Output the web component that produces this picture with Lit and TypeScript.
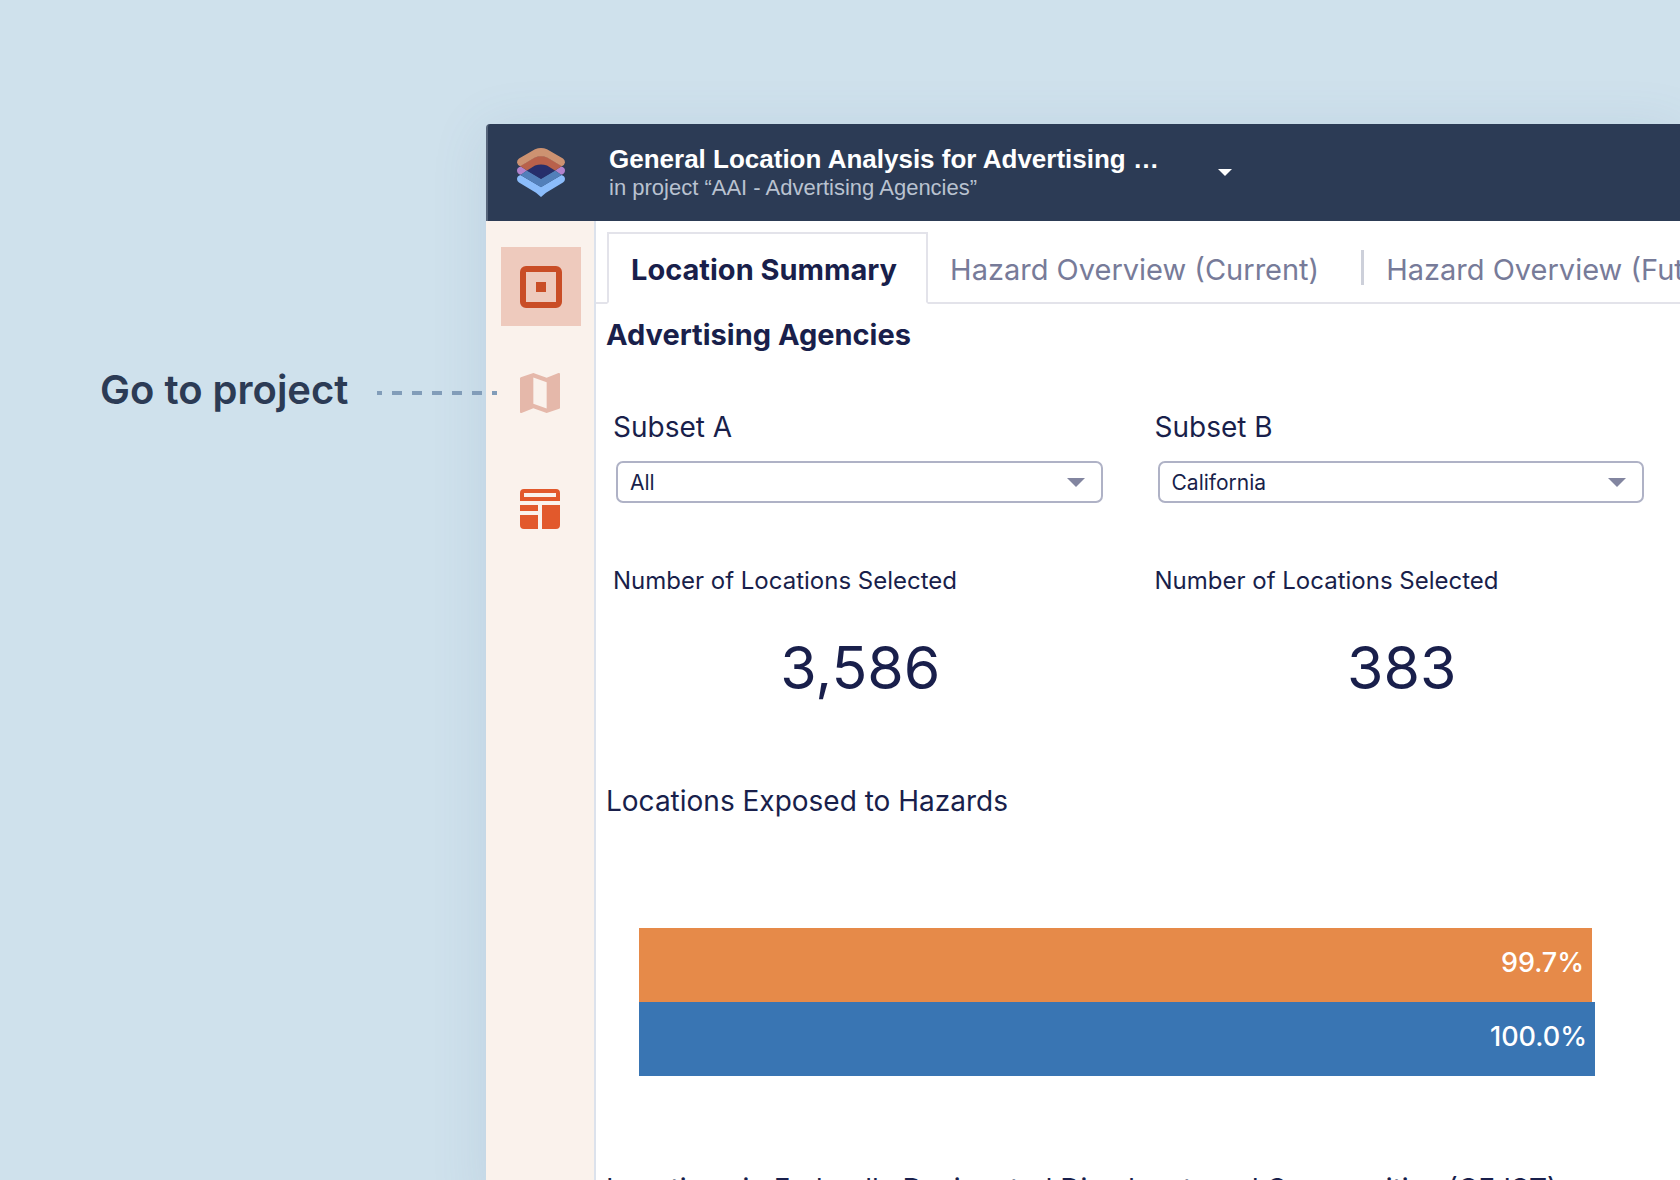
import { LitElement, html, css, svg } from "lit";
import { customElement, property, state } from "lit/decorators.js";
import { classMap } from "lit/directives/class-map.js";
import { styleMap } from "lit/directives/style-map.js";

interface Subset {
  id: string;
  label: string;
  options: string[];
  count: string;
}

interface Exposure {
  subset: string;
  percent: number;
}

const TABS = [
  "Location Summary",
  "Hazard Overview (Current)",
  "Hazard Overview (Future)",
];

const SUBSETS: Subset[] = [
  { id: "subset-a", label: "Subset A", options: ["All"], count: "3,586" },
  { id: "subset-b", label: "Subset B", options: ["California"], count: "383" },
];

const EXPOSURES: Exposure[] = [
  { subset: "a", percent: 99.7 },
  { subset: "b", percent: 100 },
];

const logo = html`
  <svg width="48" height="49" viewBox="0 0 48 49" aria-hidden="true">
    <path fill="#b282cc" d="M4 18.5L10 22.5L4 26.7Q0 26 0 22.5Q0 19.3 4 18.5ZM44 18.5L38 22.5L44 26.7Q48 26 48 22.5Q48 19.3 44 18.5Z" />
    <path fill="#8bbcfb" d="M3.5 27L24 39L44.5 27Q48 28 48 31Q48 33.2 46 34.5L29 44.8L24 49L19 44.8L2 34.5Q0 33.2 0 31Q0 28 3.5 27Z" />
    <path fill="#527fba" d="M10 22.5L24 30.8L38 22.5L44.5 27L24 39.2L3.5 27Z" />
    <path fill="#262e6b" d="M9.8 22.5L18 17.5Q24 15 30 17.5L38.2 22.5L24 31Z" />
    <path fill="#b8614b" d="M24 8Q27 8 30 9.2L45 18L38 22.6L30 17.6Q24 15.2 18 17.6L10 22.6L3 18L18 9.2Q21 8 24 8Z" />
    <path fill="#cd9271" d="M24 0Q27 0 30 1.3L46 10.5Q48 12 48 14.5Q47.5 17.4 44.8 18.2L30 9.5Q24 7 18 9.5L3.2 18.2Q.5 17.4 0 14.5Q0 12 2 10.5L18 1.3Q21 0 24 0Z" />
  </svg>
`;

const NAV_ICONS = {
  project: svg`
    <svg width="42" height="42" viewBox="0 0 42 42" aria-hidden="true">
      <rect x="3" y="3" width="36" height="36" rx="3" fill="none" stroke="#c94d26" stroke-width="6" />
      <rect x="16" y="16" width="10" height="10" fill="#c94d26" />
    </svg>`,
  map: svg`
    <svg width="42" height="42" viewBox="3 3 18.9 18.9" aria-hidden="true">
      <path fill="#e5b8aa" d="M20.5 3l-.16.03L15 5.1 9 3 3.36 4.9c-.21.07-.36.25-.36.48V20.5c0 .28.22.5.5.5l.16-.03L9 18.9l6 2.1 5.64-1.9c.21-.07.36-.25.36-.48V3.5c0-.28-.22-.5-.5-.5zM15 19l-6-2.11V5l6 2.11V19z" />
    </svg>`,
  dashboard: svg`
    <svg width="42" height="42" viewBox="0 -1 42 42" aria-hidden="true">
      <path fill="#e2592c" fill-rule="evenodd" d="M4 0H36A4 4 0 0 1 40 4V12H0V4A4 4 0 0 1 4 0ZM4 4V8H36V4ZM0 16H18V22H0ZM0 26H18V40H4A4 4 0 0 1 0 36ZM22 16H40V36A4 4 0 0 1 36 40H22Z" />
    </svg>`,
};

@customElement("app-header")
class AppHeader extends LitElement {
  static styles = css`
    :host {
      display: block;
    }
    .bar {
      display: flex;
      align-items: center;
      box-sizing: border-box;
      min-height: 97px;
      padding: 0 29px;
      background: #2c3b55;
      border-left: 2px solid #56647a;
      border-top-left-radius: 4px;
      font-family: "Liberation Sans", Arial, sans-serif;
      color: #fff;
    }
    .logo {
      display: flex;
      margin-right: 44px;
    }
    .title {
      margin: 0;
      font-size: 26px;
      line-height: 30px;
      font-weight: 700;
      white-space: nowrap;
    }
    .project {
      margin: 0;
      font-size: 22px;
      line-height: 28px;
      color: #b9c2d0;
      white-space: nowrap;
    }
    .menu {
      display: flex;
      align-items: center;
      justify-content: center;
      width: 40px;
      height: 40px;
      margin-left: 46px;
      padding: 0;
      border: 0;
      background: none;
    }
  `;

  render() {
    return html`
      <header class="bar">
        <a class="logo" href="#home" aria-label="Home">${logo}</a>
        <div>
          <h1 class="title">General Location Analysis for Advertising …</h1>
          <p class="project">in project “AAI - Advertising Agencies”</p>
        </div>
        <button class="menu" type="button" aria-label="Switch analysis">
          <svg width="14" height="7" viewBox="0 0 14 7" aria-hidden="true">
            <path d="M0 0H14L7 7Z" fill="#fff" />
          </svg>
        </button>
      </header>
    `;
  }
}

@customElement("side-nav")
class SideNav extends LitElement {
  static styles = css`
    :host {
      display: block;
      background: #faf2ec;
      border-right: 2px solid #dce2ec;
    }
    .items {
      display: flex;
      flex-direction: column;
      align-items: center;
      gap: 28px;
      padding: 26px 13px 26px 15px;
    }
    .item {
      display: flex;
      align-items: center;
      justify-content: center;
      width: 80px;
      height: 79px;
      padding: 0;
      border: 0;
      background: none;
    }
    .item.active {
      background: #eecabd;
    }
    .item.separate {
      margin-top: 8px;
    }
  `;

  render() {
    return html`
      <nav class="items" aria-label="Views">
        <button class="item active" type="button" aria-label="Analysis">${NAV_ICONS.project}</button>
        <button class="item" type="button" aria-label="Map">${NAV_ICONS.map}</button>
        <button class="item separate" type="button" aria-label="Dashboard">${NAV_ICONS.dashboard}</button>
      </nav>
    `;
  }
}

@customElement("tab-strip")
class TabStrip extends LitElement {
  @state() private selected = 0;

  static styles = css`
    :host {
      display: block;
      min-width: 0;
      overflow: hidden;
    }
    .tabs {
      display: flex;
      padding-top: 11px;
    }
    .lead {
      flex: 0 0 11px;
      border-bottom: 2px solid #e3e3ea;
    }
    .rest {
      flex: 1 0 0;
      border-bottom: 2px solid #e3e3ea;
    }
    .tab {
      display: flex;
      align-items: center;
      flex: none;
      box-sizing: border-box;
      height: 72px;
      padding: 6px 0 0 22px;
      border: 0;
      border-bottom: 2px solid #e3e3ea;
      background: none;
      font-family: Inter, sans-serif;
      font-size: 29px;
      line-height: 36px;
      color: #777b99;
      white-space: nowrap;
    }
    .tab.active {
      padding: 4px 29px 0 22px;
      border: 2px solid #e3e3ea;
      border-bottom-color: transparent;
      color: #191f4b;
      font-weight: 700;
    }
    .divider {
      width: 3px;
      height: 35px;
      margin: 0 0 6px 42px;
      background: #cdd0da;
    }
  `;

  render() {
    return html`
      <div class="tabs" role="tablist">
        <span class="lead"></span>
        ${TABS.map(
          (name, i) => html`
            <button
              class=${classMap({ tab: true, active: i === this.selected })}
              type="button"
              role="tab"
              aria-selected=${i === this.selected}
              @click=${() => (this.selected = i)}
            >
              ${name}${i === this.selected ? "" : html`<span class="divider"></span>`}
            </button>
          `
        )}
        <span class="rest"></span>
      </div>
    `;
  }
}

@customElement("subset-panel")
class SubsetPanel extends LitElement {
  @property({ attribute: false }) subset!: Subset;

  static styles = css`
    :host {
      display: flex;
      flex-direction: column;
      min-width: 0;
      font-family: Inter, sans-serif;
      color: #191f4b;
    }
    .label {
      font-size: 28px;
      line-height: 34px;
    }
    .picker {
      display: grid;
      align-items: center;
      margin: 17px 0 63px 3px;
    }
    .select {
      grid-area: 1 / 1;
      appearance: none;
      box-sizing: border-box;
      width: 100%;
      height: 42px;
      padding: 0 48px 0 12px;
      border: 2px solid #afb2c6;
      border-radius: 7px;
      background: #fff;
      font-family: inherit;
      font-size: 21px;
      color: inherit;
    }
    .arrow {
      grid-area: 1 / 1;
      justify-self: end;
      margin-right: 18px;
      pointer-events: none;
    }
    .caption {
      margin: 0;
      font-size: 24px;
      line-height: 30px;
    }
    .value {
      margin: 36px 0 0;
      padding-left: 5px;
      font-size: 59px;
      line-height: 72px;
      text-align: center;
    }
  `;

  render() {
    const { id, label, options, count } = this.subset;
    return html`
      <label class="label" for=${id}>${label}</label>
      <div class="picker">
        <select class="select" id=${id}>
          ${options.map((option) => html`<option>${option}</option>`)}
        </select>
        <svg class="arrow" width="18" height="9" viewBox="0 0 18 9" aria-hidden="true">
          <path d="M0 0H18L9 9Z" fill="#8285a0" />
        </svg>
      </div>
      <p class="caption">Number of Locations Selected</p>
      <p class="value">${count}</p>
    `;
  }
}

@customElement("exposure-chart")
class ExposureChart extends LitElement {
  static styles = css`
    :host {
      display: block;
      font-family: Inter, sans-serif;
    }
    .bar {
      display: flex;
      align-items: center;
      justify-content: flex-end;
      box-sizing: border-box;
      height: 74px;
      padding: 0 8px 4px 0;
      font-size: 27px;
      line-height: 34px;
      font-weight: 500;
      color: #fff;
    }
    .bar.a {
      background: #e68a49;
    }
    .bar.b {
      background: #3975b3;
    }
  `;

  render() {
    return EXPOSURES.map(
      ({ subset, percent }) => html`
        <div
          class=${classMap({ bar: true, [subset]: true })}
          style=${styleMap({ width: `${percent}%` })}
        >
          ${percent.toFixed(1)}%
        </div>
      `
    );
  }
}

@customElement("app-root")
class AppRoot extends LitElement {
  static styles = css`
    :host {
      display: grid;
      grid-template-columns: 486px minmax(0, 1fr);
      height: 100vh;
      overflow: hidden;
      background: #cfe1ec;
      font-family: Inter, sans-serif;
      color: #191f4b;
    }
    .callout {
      display: flex;
      align-items: center;
      justify-content: space-between;
      align-self: start;
      z-index: 1;
      margin: 366px -11px 0 100px;
      font-size: 40px;
      line-height: 48px;
      font-weight: 600;
      color: #2c3b55;
      white-space: nowrap;
    }
    .window {
      display: grid;
      grid-template-columns: 110px minmax(0, 1fr);
      grid-template-rows: auto 1fr;
      margin-top: 124px;
      border-top-left-radius: 4px;
      box-shadow: 0 8px 56px rgba(72, 108, 152, 0.13);
    }
    .header {
      grid-column: 1 / -1;
    }
    .main {
      min-width: 0;
      background: #fff;
    }
    .content {
      padding: 13px 0 0 10px;
    }
    .heading {
      margin: 0;
      font-size: 29px;
      line-height: 36px;
      font-weight: 700;
    }
    .subsets {
      display: grid;
      grid-template-columns: 1fr 1fr;
      gap: 52px;
      padding: 57px 36px 80px 7px;
    }
    .section {
      margin: 0;
      font-size: 28px;
      line-height: 34px;
      font-weight: 400;
      white-space: nowrap;
    }
    .chart {
      margin: 110px 85px 96px 33px;
    }
  `;

  render() {
    return html`
      <div class="callout">
        <span>Go to project</span>
        <svg width="120" height="12" viewBox="0 0 120 12" aria-hidden="true">
          <path d="M0 9H120" stroke="#829db9" stroke-width="4" stroke-dasharray="10 10" stroke-dashoffset="5" />
        </svg>
      </div>
      <div class="window">
        <app-header class="header"></app-header>
        <side-nav></side-nav>
        <main class="main">
          <tab-strip></tab-strip>
          <div class="content">
            <h2 class="heading">Advertising Agencies</h2>
            <div class="subsets">
              ${SUBSETS.map((subset) => html`<subset-panel .subset=${subset}></subset-panel>`)}
            </div>
            <h3 class="section">Locations Exposed to Hazards</h3>
            <exposure-chart class="chart"></exposure-chart>
            <h3 class="section">Locations in Federally Designated Disadvantaged Communities (CEJST)</h3>
          </div>
        </main>
      </div>
    `;
  }
}
